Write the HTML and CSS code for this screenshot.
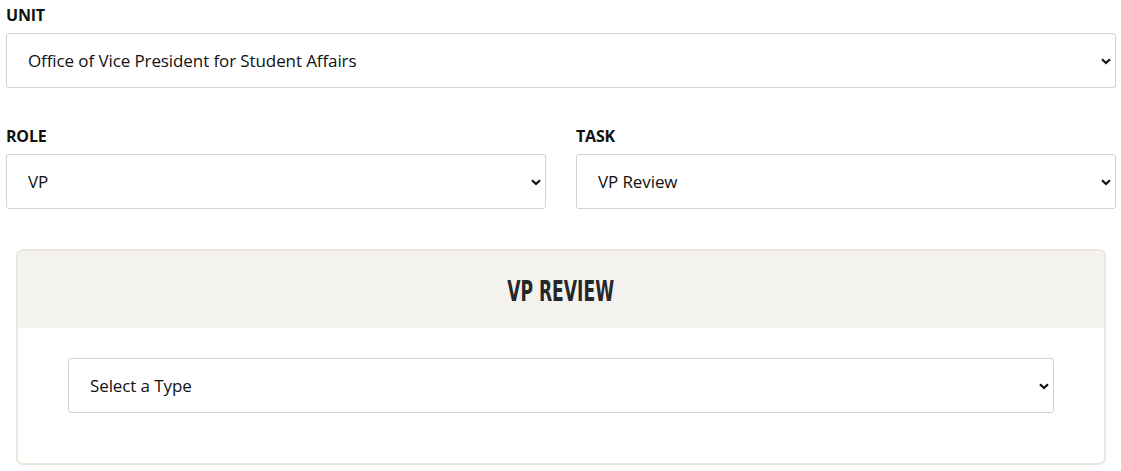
FILE: index.html
```html
<!DOCTYPE html>
<html lang="en">
<head>
<meta charset="utf-8">
<title>VP Review</title>
<link rel="stylesheet" href="styles.css">
</head>
<body>
<div class="page">
  <div class="field">
    <label class="label" for="unit">UNIT</label>
    <div class="select-wrap">
      <select id="unit" class="select"><option>Office of Vice President for Student Affairs</option></select>
      <svg class="chev" viewBox="0 0 10 7" width="10" height="7"><path d="M1 1.2 L5 5 L9 1.2" fill="none" stroke="#111" stroke-width="2.2"/></svg>
    </div>
  </div>
  <div class="row">
    <div class="field">
      <label class="label" for="role">ROLE</label>
      <div class="select-wrap">
        <select id="role" class="select"><option>VP</option></select>
        <svg class="chev" viewBox="0 0 10 7" width="10" height="7"><path d="M1 1.2 L5 5 L9 1.2" fill="none" stroke="#111" stroke-width="2.2"/></svg>
      </div>
    </div>
    <div class="field">
      <label class="label" for="task">TASK</label>
      <div class="select-wrap">
        <select id="task" class="select"><option>VP Review</option></select>
        <svg class="chev" viewBox="0 0 10 7" width="10" height="7"><path d="M1 1.2 L5 5 L9 1.2" fill="none" stroke="#111" stroke-width="2.2"/></svg>
      </div>
    </div>
  </div>
  <section class="panel">
    <header class="panel-head"><h2 class="panel-title">VP REVIEW</h2></header>
    <div class="panel-body">
      <div class="select-wrap">
        <select class="select"><option>Select a Type</option></select>
        <svg class="chev" viewBox="0 0 10 7" width="10" height="7"><path d="M1 1.2 L5 5 L9 1.2" fill="none" stroke="#111" stroke-width="2.2"/></svg>
      </div>
    </div>
  </section>
</div>
</body>
</html>
```
FILE: styles.css
```css
* { box-sizing: border-box; }
html, body { margin: 0; padding: 0; background: #fff; }
body {
  font-family: "Open Sans", "Noto Sans", sans-serif;
  color: #111;
}
.page {
  padding: 0 5px 0 6px;
}
.field {
  display: flex;
  flex-direction: column;
}
.label {
  display: block;
  font-weight: 700;
  font-size: 16px;
  line-height: 24px;
  margin: 3px 0 6px;
  color: #111;
  letter-spacing: -0.2px;
}
.select-wrap {
  position: relative;
}
.select {
  display: block;
  width: 100%;
  height: 55px;
  appearance: none;
  -webkit-appearance: none;
  background: #fff;
  border: 1px solid #cfd3d8;
  border-radius: 3px;
  padding: 0 40px 0 21px;
  font-family: "Open Sans", "Noto Sans", sans-serif;
  font-size: 17px;
  font-weight: 500;
  letter-spacing: -0.1px;
  color: #111;
  outline: none;
}
.chev {
  position: absolute;
  right: 5px;
  top: 50%;
  margin-top: -3px;
  pointer-events: none;
}
.row {
  display: grid;
  grid-template-columns: 1fr 1fr;
  column-gap: 30px;
  margin-top: 33px;
}
.panel {
  margin: 40px 10px 0 10px;
  border: 2px solid #ebe7dc;
  border-radius: 7px;
  overflow: hidden;
}
.panel-head {
  background: #f4f2ee;
  height: 77px;
  padding-top: 3px;
  display: flex;
  align-items: center;
  justify-content: center;
}
.panel-title {
  margin: 0;
  font-family: "Liberation Sans Narrow", "DejaVu Sans Condensed", "Roboto", sans-serif;
  font-weight: 700;
  font-size: 28px;
  color: #25272b;
  letter-spacing: 0;
  transform: scaleX(0.68);
}
.panel-body {
  padding: 30px 50px 50px;
}
```
